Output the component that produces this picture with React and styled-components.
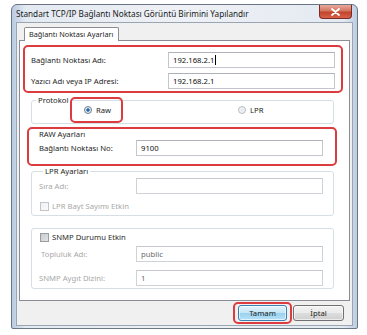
import React from 'react'
import styled, { createGlobalStyle } from 'styled-components'

const GlobalStyle = createGlobalStyle`
  html, body {
    margin: 0;
    background: #ffffff;
  }
  body {
    font-family: "Noto Sans", "Open Sans", sans-serif;
    font-size: 7.7px;
    color: #1e1e1e;
  }
  * {
    box-sizing: border-box;
  }
`

const App = () => {
  return (
    <>
      <GlobalStyle />
      <Window>
        <TitleBar>
          <Title>Standart TCP/IP Bağlantı Noktası Görüntü Birimini Yapılandır</Title>
          <CloseButton aria-label="Kapat">
            <svg width="9" height="8" viewBox="0 0 9 8">
              <path d="M1 1 L8 7 M8 1 L1 7" stroke="#ffffff" strokeWidth="1.8" strokeLinecap="round" />
            </svg>
          </CloseButton>
        </TitleBar>
        <Client>
          <TabStrip>
            <Tab>Bağlantı Noktası Ayarları</Tab>
          </TabStrip>
          <Panel>
            <AddressBox>
              <Label>Bağlantı Noktası Adı:</Label>
              <TextBox>192.168.2.1<Caret /></TextBox>
              <Label>Yazıcı Adı veya IP Adresi:</Label>
              <TextBox>192.168.2.1</TextBox>
            </AddressBox>

            <ProtocolGroup>
              <Legend>Protokol</Legend>
              <RadioRow>
                <RawOption>
                  <Radio $checked />
                  <span>Raw</span>
                </RawOption>
                <LprOption>
                  <Radio />
                  <span>LPR</span>
                </LprOption>
              </RadioRow>
            </ProtocolGroup>

            <RawBox>
              <Caption>RAW Ayarları</Caption>
              <FieldRow>
                <Label>Bağlantı Noktası No:</Label>
                <TextBox>9100</TextBox>
              </FieldRow>
            </RawBox>

            <LprGroup>
              <Legend>LPR Ayarları</Legend>
              <FieldRow>
                <Label $disabled>Sıra Adı:</Label>
                <TextBox $disabled />
              </FieldRow>
              <CheckRow $disabled>
                <CheckBox />
                <span>LPR Bayt Sayımı Etkin</span>
              </CheckRow>
            </LprGroup>

            <SnmpGroup>
              <CheckRow>
                <CheckBox $filled />
                <span>SNMP Durumu Etkin</span>
              </CheckRow>
              <FieldRow $top={3}>
                <Label $disabled $indent={2}>Topluluk Adı:</Label>
                <TextBox $disabled>public</TextBox>
              </FieldRow>
              <FieldRow $top={8}>
                <Label $disabled>SNMP Aygıt Dizini:</Label>
                <TextBox $disabled>1</TextBox>
              </FieldRow>
            </SnmpGroup>
          </Panel>

          <ButtonRow>
            <ButtonMark>
              <Button $primary>Tamam</Button>
            </ButtonMark>
            <Button>İptal</Button>
          </ButtonRow>
        </Client>
      </Window>
    </>
  )
}

const Window = styled.div`
  margin: 4px 0 0 11px;
  width: 347px;
  height: 325px;
  display: flex;
  flex-direction: column;
  padding: 0 4px 2px;
  border: 1px solid #6b7584;
  border-radius: 6px 6px 2px 2px;
  background: linear-gradient(90deg, #b9cbe2 0%, #e4eaf2 4%, #eef1f5 50%, #e4eaf2 96%, #bccde2 100%);
`

const TitleBar = styled.div`
  height: 17px;
  display: flex;
  align-items: flex-start;
  justify-content: space-between;
`

const Title = styled.span`
  padding: 3px 0 0 0;
  font-size: 8.2px;
  color: #1a1a1a;
  white-space: nowrap;
`

const CloseButton = styled.div`
  width: 33px;
  height: 14px;
  margin-right: 1px;
  display: flex;
  align-items: center;
  justify-content: center;
  border: 1px solid #7d2a24;
  border-top: none;
  border-radius: 0 0 4px 4px;
  background: linear-gradient(180deg, #e9a99b 0%, #d2765f 45%, #c2442b 55%, #d8624a 100%);
`

const Client = styled.div`
  flex: 1;
  display: flex;
  flex-direction: column;
  padding: 0 2px;
  border: 1px solid #9aa5b3;
  background: #f0f0f0;
`

const TabStrip = styled.div`
  display: flex;
  margin-top: 4px;
  padding-left: 5px;
`

const Tab = styled.div`
  position: relative;
  z-index: 1;
  height: 14px;
  margin-bottom: -1px;
  padding: 1px 5px 0 4px;
  border: 1px solid #898c95;
  border-bottom: none;
  border-radius: 2px 2px 0 0;
  background: #ffffff;
  font-size: 7.3px;
  white-space: nowrap;
`

const Panel = styled.div`
  height: 261px;
  display: flex;
  flex-direction: column;
  border: 1px solid #898c95;
  background: #ffffff;
`

const Mark = styled.div`
  border: 2px solid #dc3b3f;
  border-radius: 5px;
`

const AddressBox = styled(Mark)`
  margin: 4px 0 0 3px;
  width: 320px;
  padding: 5px 6px 2px;
  display: grid;
  grid-template-columns: 1fr 167px;
  grid-auto-rows: 16px;
  row-gap: 5px;
  align-items: center;
`

const Label = styled.span`
  padding-left: ${({ $indent }) => $indent || 0}px;
  color: ${({ $disabled }) => ($disabled ? '#a8a8a8' : '#1e1e1e')};
  white-space: nowrap;
`

const TextBox = styled.div`
  height: 16px;
  display: flex;
  align-items: center;
  padding-left: 4px;
  border: 1px solid ${({ $disabled }) => ($disabled ? '#cfd3d8' : '#c3c7cd')};
  border-top-color: ${({ $disabled }) => ($disabled ? '#c5c9ce' : '#aeb2b8')};
  background: #ffffff;
  color: ${({ $disabled }) => ($disabled ? '#6a6a6a' : '#111111')};
`

const Caret = styled.span`
  width: 1px;
  height: 10px;
  margin-left: 1px;
  background: #000000;
`

const Group = styled.fieldset`
  margin: 0 15px 0 11px;
  padding: 0;
  min-width: 0;
  border: 1px solid #d5dfe5;
  border-radius: 3px;
`

const Legend = styled.legend`
  margin-left: 4px;
  padding: 0 2px;
  line-height: 11px;
  color: #1e1e1e;
`

const ProtocolGroup = styled(Group)`
  margin-top: 2px;
`

const RadioRow = styled.div`
  display: flex;
  align-items: center;
  height: 26px;
  margin-top: -9px;
  padding-left: 38px;
`

const Option = styled.label`
  display: flex;
  align-items: center;
  gap: 4px;
`

const RawOption = styled(Mark).attrs({ as: 'label' })`
  display: flex;
  align-items: center;
  gap: 4px;
  width: 53px;
  height: 26px;
  padding-left: 12px;
`

const LprOption = styled(Option)`
  margin-left: 115px;
`

const Radio = styled.span`
  width: 8px;
  height: 8px;
  border-radius: 50%;
  border: 1px solid ${({ $checked }) => ($checked ? '#6b7d90' : '#b6bcc3')};
  background: ${({ $checked }) =>
    $checked
      ? 'radial-gradient(circle, #1f4f80 0%, #3b7bbd 35%, #dfe8f1 45%, #f4f6f8 100%)'
      : 'radial-gradient(circle, #e6e9ec 0%, #f7f8f9 100%)'};
`

const RawBox = styled(Mark)`
  margin: 3px 0 0 7px;
  width: 310px;
  padding: 0 12px 8px 10px;
`

const Caption = styled.div`
  line-height: 11px;
`

const FieldRow = styled.div`
  display: grid;
  grid-template-columns: 97px 187px;
  align-items: center;
  margin-top: ${({ $top }) => $top || 0}px;
`

const LprGroup = styled(Group)`
  padding: 0 10px 3px 7px;

  ${FieldRow} {
    margin-top: 1px;
  }
`

const CheckRow = styled.label`
  display: flex;
  align-items: center;
  gap: 3px;
  height: 12px;
  margin-top: ${({ $disabled }) => ($disabled ? 6 : 0)}px;
  padding-left: 1px;
  color: ${({ $disabled }) => ($disabled ? '#a8a8a8' : '#2a2a2a')};
`

const CheckBox = styled.span`
  width: 9px;
  height: 9px;
  border: 1px solid ${({ $filled }) => ($filled ? '#9a9c9e' : '#c3c6c9')};
  background: ${({ $filled }) =>
    $filled ? 'linear-gradient(135deg, #c9cbcd, #e2e3e4)' : 'linear-gradient(135deg, #eef0f2, #fbfbfc)'};
`

const SnmpGroup = styled(Group)`
  margin-top: 12px;
  padding: 2px 10px 2px 7px;
`

const ButtonRow = styled.div`
  display: flex;
  justify-content: flex-end;
  align-items: flex-start;
  gap: 1px;
  margin-top: 1px;
  padding-right: 6px;
`

const ButtonMark = styled(Mark)`
  padding: 1px 3px 1px;
`

const Button = styled.button`
  width: ${({ $primary }) => ($primary ? 49 : 51)}px;
  height: 16px;
  margin: ${({ $primary }) => ($primary ? 0 : '3px 0 0')};
  padding: 0;
  font-family: inherit;
  font-size: 7.7px;
  color: #1e1e1e;
  border-radius: 3px;
  border: 1px solid ${({ $primary }) => ($primary ? '#3c7fb1' : '#707070')};
  background: ${({ $primary }) =>
    $primary
      ? 'linear-gradient(180deg, #e5f4fc 0%, #c4e5f6 50%, #98d1ef 51%, #b7e2f8 100%)'
      : 'linear-gradient(180deg, #f2f2f2 0%, #ebebeb 50%, #dddddd 51%, #cfcfcf 100%)'};
  box-shadow: inset 0 0 0 1px rgba(255, 255, 255, 0.6);
`

export default App
